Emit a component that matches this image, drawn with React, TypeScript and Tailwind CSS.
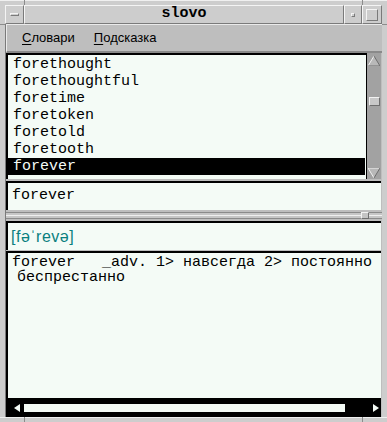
const mono = "font-['Liberation_Mono','DejaVu_Sans_Mono',monospace]";
const sans = "font-['Liberation_Sans','Noto_Sans',sans-serif]";

const words = [
  "forethought",
  "forethoughtful",
  "foretime",
  "foretoken",
  "foretold",
  "foretooth",
  "forever",
];

const UpArrow = () => (
  <svg width="12" height="10" viewBox="0 0 12 10">
    <polygon points="6,0 12,10 0,10" fill="#b8b8b8" />
    <polyline points="0,10 6,0" stroke="#f0f0f0" strokeWidth="1" fill="none" />
    <polyline points="6,0 12,10 0,10" stroke="#6e6e6e" strokeWidth="1" fill="none" />
  </svg>
);

const DownArrow = () => (
  <svg width="12" height="10" viewBox="0 0 12 10">
    <polygon points="0,0 12,0 6,10" fill="#b8b8b8" />
    <polyline points="6,10 0,0 12,0" stroke="#f0f0f0" strokeWidth="1" fill="none" />
    <polyline points="12,0 6,10" stroke="#6e6e6e" strokeWidth="1" fill="none" />
  </svg>
);

const App = () => {
  return (
    <div className="w-[387px] h-[422px] bg-[#cdcdcd] flex flex-col overflow-hidden relative">
      {/* frame corner ticks */}
      <div className="absolute left-[24px] top-0 w-px h-[5px] bg-[#8c8c8c]" />
      <div className="absolute left-[362px] top-0 w-px h-[5px] bg-[#8c8c8c]" />
      <div className="absolute left-[24px] bottom-0 w-px h-[5px] bg-[#8c8c8c]" />
      <div className="absolute left-[362px] bottom-0 w-px h-[5px] bg-[#8c8c8c]" />
      <div className="absolute left-0 top-[24px] w-[5px] h-px bg-[#8c8c8c]" />
      <div className="absolute right-0 top-[24px] w-[5px] h-px bg-[#8c8c8c]" />

      <div className="h-[5px] border-t border-[#f0f0f0]" />

      {/* title bar */}
      <div className="mx-[5px] h-[19px] flex">
        <div className="w-[19px] border border-t-[#f4f4f4] border-l-[#f4f4f4] border-b-[#7a7a7a] border-r-[#7a7a7a] bg-[#cdcdcd] flex items-center justify-center">
          <div className="w-[9px] h-[3px] border border-t-[#f4f4f4] border-l-[#f4f4f4] border-b-[#7a7a7a] border-r-[#7a7a7a]" />
        </div>
        <div
          className={`flex-1 border border-t-[#f4f4f4] border-l-[#f4f4f4] border-b-[#7a7a7a] border-r-[#7a7a7a] flex items-center justify-center text-[15px] font-bold text-black ${mono}`}
        >
          slovo
        </div>
        <div className="w-[18px] border border-t-[#f4f4f4] border-l-[#f4f4f4] border-b-[#7a7a7a] border-r-[#7a7a7a] flex items-center justify-center">
          <div className="w-[4px] h-[4px] border border-t-[#f4f4f4] border-l-[#f4f4f4] border-b-[#7a7a7a] border-r-[#7a7a7a]" />
        </div>
        <div className="w-[20px] border border-t-[#f4f4f4] border-l-[#f4f4f4] border-b-[#7a7a7a] border-r-[#7a7a7a] flex items-center justify-center">
          <div className="w-[12px] h-[12px] border border-t-[#f4f4f4] border-l-[#f4f4f4] border-b-[#7a7a7a] border-r-[#7a7a7a]" />
        </div>
      </div>

      {/* client area */}
      <div className="mx-[5px] flex-1 flex flex-col bg-[#bebebe] border-l border-[#7a7a7a]">
        {/* menu */}
        <div
          className={`h-[29px] flex items-center gap-[19px] pl-[15px] bg-[#bebebe] border-t border-l border-b-2 border-t-[#eaeaea] border-l-[#eaeaea] border-b-[#8a8a8a] text-[13px] text-black ${sans}`}
        >
          <span>
            <span className="underline underline-offset-2">С</span>ловари
          </span>
          <span>
            <span className="underline underline-offset-2">П</span>одсказка
          </span>
        </div>

        {/* list + scrollbar */}
        <div className="h-[126px] flex pr-[1px]">
          <div className={`flex-1 bg-[#f4fbf6] border-t-2 border-l-2 border-r border-black pt-[1px] ${mono} text-[15px] leading-[17px]`}>
            {words.map((w) => (
              <div
                key={w}
                className={
                  w === "forever"
                    ? "bg-black text-[#f4fbf6] pl-[5px] mr-[1px]"
                    : "text-black pl-[5px]"
                }
              >
                {w}
              </div>
            ))}
          </div>
          <div className="w-[14px] bg-[#a2a2a2] flex flex-col items-center pt-[3px] pb-[1px]">
            <UpArrow />
            <div className="mt-[31px] w-[11px] h-[9px] bg-[#c8c8c8] border border-t-[#f2f2f2] border-l-[#f2f2f2] border-b-[#6e6e6e] border-r-[#6e6e6e]" />
            <div className="flex-1" />
            <DownArrow />
          </div>
        </div>

        {/* entry */}
        <div className="h-[33px] pt-[2px] pb-[2px] pr-[1px]">
          <div className={`h-full bg-[#f4fbf6] border-t-2 border-l-2 border-black flex items-center pl-[4px] pb-[1px] ${mono} text-[15px] text-black`}>
            forever
          </div>
        </div>

        {/* sash */}
        <div className="h-[7px] relative border-t border-b border-t-[#8a8a8a] border-b-[#8a8a8a] bg-[#c6c6c6]">
          <div className="absolute top-[2px] left-0 right-0 h-px bg-[#efefef]" />
          <div className="absolute left-[355px] -top-px w-[8px] h-[7px] bg-[#c4c4c4] border border-t-[#f2f2f2] border-l-[#f2f2f2] border-b-[#6e6e6e] border-r-[#6e6e6e]" />
        </div>

        {/* transcription */}
        <div className="h-[31px] pt-[2px] pr-[1px]">
          <div className={`h-full bg-[#f4fbf6] border-t-2 border-l-2 border-black flex items-center pl-[3px] ${sans} text-[16px] tracking-[0.5px] text-[#0a7f7f]`}>
            [fəˈrevə]
          </div>
        </div>

        {/* article */}
        <div className="flex-1 flex flex-col pr-[1px] pt-[1px]">
          <div className={`flex-1 bg-[#f4fbf6] border-t-2 border-l-2 border-black pl-[4px] pt-[2px] ${mono} text-[15px] leading-[15px] text-black whitespace-pre`}>
            <div>forever   _adv. 1&gt; навсегда 2&gt; постоянно</div>
            <div className="pl-[5px]">беспрестанно</div>
          </div>
          <div className="h-[19px] bg-black border-l-2 border-black flex items-center">
            <svg width="6" height="8" viewBox="0 0 6 8" className="ml-[6px]">
              <polygon points="6,0 6,8 0,4" fill="#f4fbf6" />
            </svg>
            <div className="ml-[4px] w-[321px] h-[8px] bg-[#f4fbf6]" />
            <div className="flex-1" />
            <svg width="6" height="8" viewBox="0 0 6 8" className="mr-[2px]">
              <polygon points="0,0 6,4 0,8" fill="#f4fbf6" />
            </svg>
          </div>
        </div>
      </div>

      <div className="h-[5px] border-t border-[#f0f0f0]" />
    </div>
  );
};

export default App;
